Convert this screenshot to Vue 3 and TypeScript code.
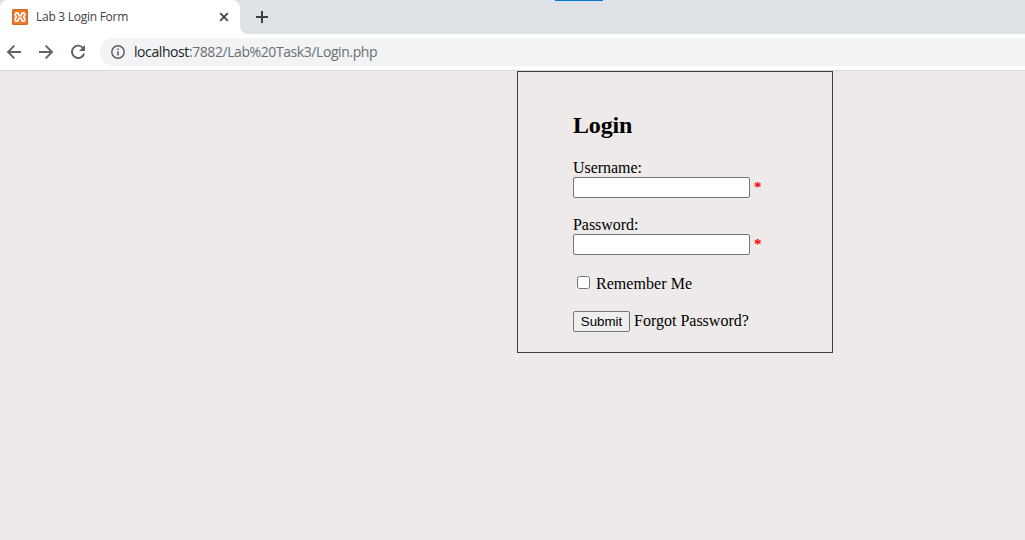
<script setup lang="ts">
import { ref } from 'vue'

interface Field {
  id: string
  label: string
  type: string
}

const fields: Field[] = [
  { id: 'username', label: 'Username:', type: 'text' },
  { id: 'password', label: 'Password:', type: 'password' },
]
const values = ref<Record<string, string>>({ username: '', password: '' })
const remember = ref(false)
</script>

<template>
  <div class="window">
    <header class="tabs">
      <div class="tab">
        <svg class="favicon" width="16" height="16" viewBox="0 0 16 16">
          <rect width="16" height="16" rx="1.5" fill="#ee7a2e" />
          <rect x=".5" y=".5" width="15" height="15" rx="1.2" fill="none" stroke="#cf6526" />
          <path d="M6.500 5.300C6.300 3.300 3.200 3.300 3.200 5.500c0 1.300.5 1.900 1.200 2.500-.7.600-1.200 1.200-1.200 2.500 0 2.300 3.100 2.300 3.300.2 0-1.300.6-1.700 1.500-1.700s1.500.4 1.500 1.700c.2 2.100 3.300 2.100 3.300-.2 0-1.300-.5-1.900-1.200-2.500.7-.6 1.200-1.200 1.200-2.500 0-2.200-3.100-2.200-3.300-.2 0 1.200-.6 1.700-1.500 1.700s-1.500-.5-1.500-1.700Z" fill="none" stroke="#fff" stroke-width="1.700" stroke-linejoin="round" />
        </svg>
        <span class="tab-title">Lab 3 Login Form</span>
        <svg class="close" width="10" height="10" viewBox="0 0 10 10">
          <path d="M1.200 1.200l7.600 7.600M8.800 1.200L1.200 8.800" stroke="#3c4043" stroke-width="1.700" />
        </svg>
        <svg class="flare" width="8" height="8" viewBox="0 0 8 8"><path d="M0 0a8 8 0 0 0 8 8H0Z" fill="#fff" /></svg>
      </div>
      <svg class="plus" width="12" height="12" viewBox="0 0 12 12">
        <path d="M6 0v12M0 6h12" stroke="#3c4043" stroke-width="2" />
      </svg>
      <div class="strip"><div class="strip-active"></div></div>
    </header>

    <nav class="toolbar">
      <svg width="16" height="16" viewBox="0 0 16 16" class="nav-icon">
        <path d="M15 8H2.500M8.300 1.700L2 8l6.300 6.300" fill="none" stroke="#5f6368" stroke-width="1.900" />
      </svg>
      <svg width="16" height="16" viewBox="0 0 16 16" class="nav-icon">
        <path d="M1 8h12.500M7.700 1.700L14 8l-6.300 6.300" fill="none" stroke="#5f6368" stroke-width="1.900" />
      </svg>
      <svg width="16" height="16" viewBox="0 0 16 16" class="nav-icon">
        <path d="M13.300 4.300A6.200 6.200 0 1 0 14.100 9.600" fill="none" stroke="#5f6368" stroke-width="1.900" />
        <path d="M15 1v6H9Z" fill="#5f6368" />
      </svg>
      <div class="address">
        <svg width="14" height="14" viewBox="0 0 14 14">
          <circle cx="7" cy="7" r="6.200" fill="none" stroke="#5f6368" stroke-width="1.500" />
          <path d="M7 6.200v4.300M7 3.500V5" stroke="#5f6368" stroke-width="1.600" />
        </svg>
        <span class="url"><span class="host">localhost</span>:7882/Lab%20Task3/Login.php</span>
      </div>
    </nav>

    <main class="page">
      <form class="login" @submit.prevent>
        <h2>Login</h2>
        <div v-for="field in fields" :key="field.id" class="field">
          <label :for="field.id">{{ field.label }}</label>
          <div class="entry">
            <input :id="field.id" v-model="values[field.id]" class="text-input" :type="field.type" />
            <span class="required">*</span>
          </div>
        </div>
        <label class="remember"><input v-model="remember" class="check" type="checkbox" /><span>Remember Me</span></label>
        <div class="actions">
          <button type="submit">Submit</button>
          <a>Forgot Password?</a>
        </div>
      </form>
    </main>
  </div>
</template>

<style>
body {
  margin: 0;
  overflow: hidden;
}
</style>

<style scoped>
.window {
  width: 1025px;
  height: 540px;
  display: flex;
  flex-direction: column;
  overflow: hidden;
  background: #eeeae9;
}
svg {
  display: block;
  flex: none;
}
.tabs {
  position: relative;
  height: 34px;
  flex: none;
  display: flex;
  align-items: center;
  background: #dee1e6;
}
.tab {
  position: relative;
  box-sizing: border-box;
  width: 240px;
  height: 34px;
  padding: 0 11px 0 12px;
  display: flex;
  align-items: center;
  border-radius: 8px 8px 0 0;
  background: #fff;
}
.tab-title {
  flex: 1;
  margin-left: 8px;
  font: 12px/16px "Open Sans", sans-serif;
  letter-spacing: -0.27px;
  color: #3c4043;
  white-space: nowrap;
}
.flare {
  position: absolute;
  left: 240px;
  bottom: 0;
}
.plus {
  margin-left: 16px;
}
.strip {
  position: absolute;
  top: 0;
  left: 555px;
  width: 241px;
  height: 1px;
  background: #e5e5e5;
}
.strip-active {
  width: 48px;
  height: 1px;
  background: #0078d7;
}
.toolbar {
  box-sizing: border-box;
  height: 37px;
  flex: none;
  display: flex;
  align-items: center;
  padding-left: 6px;
  background: #fff;
  border-bottom: 1px solid #d9dadb;
}
.nav-icon {
  margin-right: 16px;
}
.address {
  flex: 1;
  height: 28px;
  margin-left: -2px;
  padding-left: 11px;
  display: flex;
  align-items: center;
  gap: 9px;
  border-radius: 14px 0 0 14px;
  background: #f1f3f4;
}
.url {
  font: 14px/20px "Open Sans", sans-serif;
  letter-spacing: -0.42px;
  color: #6b6f73;
  white-space: nowrap;
}
.host {
  color: #202124;
}
.page {
  flex: 1;
  font: 16px/18px "Liberation Serif", serif;
  color: #000;
}
.login {
  box-sizing: border-box;
  width: 316px;
  height: 282px;
  margin-left: 517px;
  padding: 40px 55px 0;
  border: 1px solid #404040;
}
h2 {
  margin: 0 0 20px;
  font-size: 24px;
  line-height: 27px;
  letter-spacing: -0.15px;
}
.field {
  height: 57px;
}
.field label {
  display: block;
  letter-spacing: -0.05px;
}
.entry {
  display: flex;
  gap: 4px;
}
.text-input {
  box-sizing: border-box;
  width: 177px;
  height: 21px;
  margin: 0;
  padding: 1px 2px;
  border: 1px solid #767676;
  border-radius: 2px;
  background: #fff;
}
.required {
  padding-top: 1px;
  color: #f00;
  font-size: 15px;
  font-weight: bold;
}
.remember {
  display: flex;
  height: 38px;
  align-items: flex-start;
}
.remember span {
  margin: 2px 0 0 6px;
  letter-spacing: 0.05px;
}
.check {
  width: 13px;
  height: 13px;
  margin: 3px 0 0 4px;
}
.actions {
  display: flex;
  gap: 4px;
  align-items: flex-start;
}
button {
  box-sizing: border-box;
  width: 57px;
  height: 21px;
  padding: 0;
  border: 1px solid #767676;
  border-radius: 2px;
  background: #efefef;
  color: #000;
  font: 13.333px/17px "Liberation Sans", sans-serif;
}
a {
  padding-top: 1px;
  white-space: nowrap;
}
</style>
